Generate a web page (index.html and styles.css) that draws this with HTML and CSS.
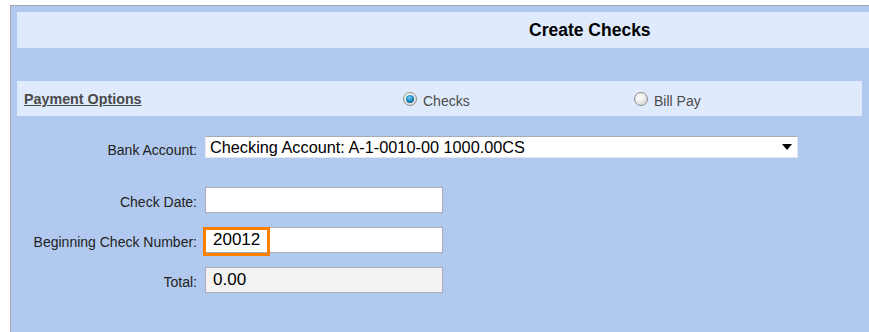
FILE: index.html
```html
<!DOCTYPE html>
<html lang="en">

<head>
    <meta charset="UTF-8">
    <meta name="viewport" content="width=device-width, initial-scale=1.0">
    <title>Create Checks</title>
    <link rel="stylesheet" href="styles.css">
</head>

<body>
    <div class="panel">
        <div class="title-bar">Create Checks</div>

        <div class="options-bar">
            <a href="#" class="options-label">Payment Options</a>
            <label class="radio-item">
                <span class="radio checked"></span>
                Checks
            </label>
            <label class="radio-item">
                <span class="radio"></span>
                Bill Pay
            </label>
        </div>

        <div class="check-form">
            <div class="form-row row-bank">
                <span class="form-label">Bank Account:</span>
                <div class="select-box">
                    <span>Checking Account: A-1-0010-00 1000.00CS</span>
                    <span class="select-arrow"></span>
                </div>
            </div>

            <div class="form-row row-date">
                <span class="form-label">Check Date:</span>
                <div class="text-box"></div>
            </div>

            <div class="form-row">
                <span class="form-label">Beginning Check Number:</span>
                <div class="text-box">
                    20012
                    <span class="focus-mark"></span>
                </div>
            </div>

            <div class="form-row">
                <span class="form-label">Total:</span>
                <div class="text-box readonly">0.00</div>
            </div>
        </div>
    </div>
</body>

</html>
```

FILE: styles.css
```css
body {
    margin: 0;
    background: #ffffff;
    font-family: Arial, 'Liberation Sans', sans-serif;
}

.panel {
    margin: 5px 0 0 10px;
    height: calc(100vh - 12px);
    background: #b1c9ee;
    border-top: 1px solid #a4a9b0;
    border-left: 1px solid #a4a9b0;
    padding: 6px 0 0 6px;
}

.title-bar {
    height: 36px;
    background: #dfeafd;
    display: flex;
    align-items: center;
    padding-left: 512px;
    font-size: 17.5px;
    font-weight: bold;
    color: #000000;
}

/* barra de opciones de pago */
.options-bar {
    margin-top: 33px;
    width: 845px;
    height: 35px;
    background: #dfeafd;
    display: grid;
    grid-template-columns: 386px 231px 1fr;
    align-items: center;
}

.options-label {
    padding-left: 7px;
    padding-top: 1px;
    font-size: 14.3px;
    font-weight: bold;
    color: #4a4a4a;
    text-decoration: underline;
}

.radio-item {
    display: flex;
    align-items: center;
    gap: 6px;
    font-size: 14px;
    color: #4a4a4a;
    padding-top: 5px;
}

.radio {
    width: 12px;
    height: 12px;
    border-radius: 50%;
    border: 1px solid #8e8f8f;
    background: radial-gradient(circle at 40% 35%, #ffffff 0%, #e6e6e6 55%, #c9c9c9 100%);
    position: relative;
    top: -2px;
}

.radio.checked::after {
    content: '';
    position: absolute;
    left: 2px;
    top: 2px;
    width: 8px;
    height: 8px;
    border-radius: 50%;
    background: radial-gradient(circle at 45% 35%, #7fd0f5 0%, #1d8fc9 45%, #0a3f6e 100%);
}

/* formulario */
.check-form {
    padding-top: 20px;
    display: flex;
    flex-direction: column;
    gap: 14px;
}

.form-row {
    display: grid;
    grid-template-columns: 180px auto;
    column-gap: 8px;
    align-items: center;
    justify-items: start;
}

.row-date {
    margin-top: 15px;
}

.form-label {
    justify-self: end;
    font-size: 14px;
    color: #222222;
    padding-top: 3px;
}

.row-bank .form-label {
    padding-top: 6px;
}

.select-box {
    width: 587px;
    height: 20px;
    background: #ffffff;
    border: 1px solid #e3e6ea;
    border-top-color: #a6abb3;
    display: flex;
    align-items: center;
    justify-content: space-between;
    padding-left: 4px;
    font-size: 16.3px;
    color: #000000;
}

.select-arrow {
    width: 0;
    height: 0;
    border-left: 5px solid transparent;
    border-right: 5px solid transparent;
    border-top: 6px solid #000000;
    margin-right: 5px;
}

.text-box {
    position: relative;
    width: 229px;
    height: 24px;
    background: #ffffff;
    border: 1px solid #a9aeb4;
    padding-left: 7px;
    display: flex;
    align-items: center;
    font-size: 17px;
    color: #000000;
}

.text-box.readonly {
    background: #f3f3f3;
}

/* marco naranja sobre el numero */
.focus-mark {
    position: absolute;
    left: -3px;
    top: -1px;
    width: 61px;
    height: 23px;
    border: 3px solid #ff8000;
}
```
